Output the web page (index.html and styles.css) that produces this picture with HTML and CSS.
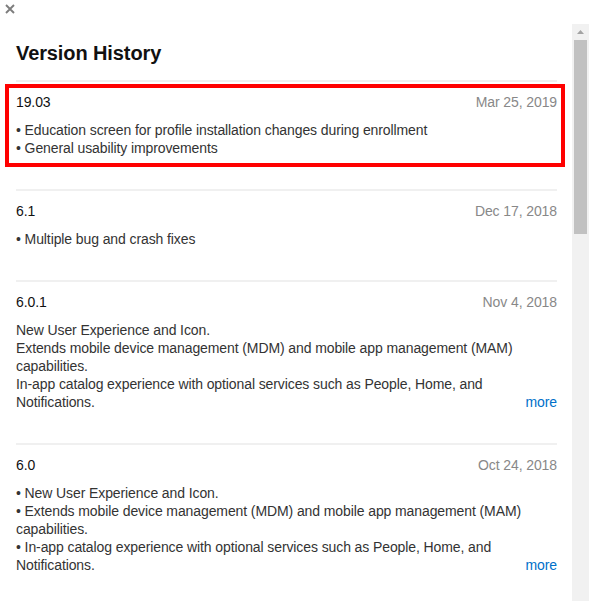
FILE: index.html
```html
<!DOCTYPE html>
<html lang="en">
<head>
<meta charset="utf-8">
<title>Version History</title>
<link rel="stylesheet" href="styles.css">
</head>
<body>
<div class="modal">
  <div class="modal-top">
    <button class="close" aria-label="Close">
      <svg width="10" height="10" viewBox="0 0 10 10"><path d="M1 1L9 9M9 1L1 9" stroke="#7d7d7d" stroke-width="1.9" stroke-linecap="butt"/></svg>
    </button>
  </div>
  <div class="scroll-area">
    <div class="viewport">
      <div class="content">
        <h2 class="heading">Version History</h2>
        <ul class="versions">
          <li class="version">
            <div class="version-head">
              <h3 class="version-number">19.03</h3>
              <time class="version-date">Mar 25, 2019</time>
            </div>
            <div class="version-notes">
              <p>• Education screen for profile installation changes during enrollment</p>
              <p>• General usability improvements</p>
            </div>
            <span class="annotation"></span>
          </li>
          <li class="version">
            <div class="version-head">
              <h3 class="version-number">6.1</h3>
              <time class="version-date">Dec 17, 2018</time>
            </div>
            <div class="version-notes">
              <p>• Multiple bug and crash fixes</p>
            </div>
          </li>
          <li class="version">
            <div class="version-head">
              <h3 class="version-number">6.0.1</h3>
              <time class="version-date">Nov 4, 2018</time>
            </div>
            <div class="version-notes">
              <p>New User Experience and Icon.</p>
              <p>Extends mobile device management (MDM) and mobile app management (MAM) capabilities.</p>
              <p>In-app catalog experience with optional services such as People, Home, and Notifications.<a class="more" href="#">more</a></p>
            </div>
          </li>
          <li class="version">
            <div class="version-head">
              <h3 class="version-number">6.0</h3>
              <time class="version-date">Oct 24, 2018</time>
            </div>
            <div class="version-notes">
              <p>• New User Experience and Icon.</p>
              <p>• Extends mobile device management (MDM) and mobile app management (MAM) capabilities.</p>
              <p>• In-app catalog experience with optional services such as People, Home, and Notifications.<a class="more" href="#">more</a></p>
            </div>
          </li>
        </ul>
      </div>
    </div>
    <div class="scrollbar" aria-hidden="true">
      <div class="scrollbar-up">
        <svg width="7" height="4" viewBox="0 0 7 4"><path d="M3.5 0L7 4H0z" fill="#a3a3a3"/></svg>
      </div>
      <div class="scrollbar-thumb"></div>
    </div>
  </div>
</div>
</body>
</html>
```
FILE: styles.css
```css
html, body {
  margin: 0;
  padding: 0;
  height: 100%;
  overflow: hidden;
  background: #fff;
}

body {
  font-family: "Liberation Sans", Arial, sans-serif;
  font-size: 14px;
  letter-spacing: -0.1px;
  color: #333;
}

.modal {
  display: flex;
  flex-direction: column;
  height: 601px;
}

.modal-top {
  flex: none;
  height: 24px;
}

.close {
  display: block;
  width: 10px;
  height: 10px;
  margin: 4px 0 0 5px;
  padding: 0;
  border: 0;
  background: none;
  cursor: pointer;
}

.close svg {
  display: block;
}

.scroll-area {
  flex: 1;
  min-height: 0;
  display: flex;
}

.viewport {
  flex: 1;
  min-width: 0;
  overflow: hidden;
}

.scrollbar {
  flex: none;
  width: 17px;
  background: #f1f1f1;
  display: flex;
  flex-direction: column;
  align-items: center;
}

.scrollbar-up {
  height: 16px;
  width: 17px;
  display: flex;
  align-items: center;
  justify-content: center;
}

.scrollbar-up svg {
  display: block;
}

.scrollbar-thumb {
  width: 13px;
  height: 194px;
  background: #c1c1c1;
}

.content {
  padding: 17px 15px 0 16px;
}

.heading {
  margin: 0 0 15px;
  font-size: 20px;
  line-height: 24px;
  font-weight: bold;
  color: #111;
  letter-spacing: -0.1px;
}

.versions {
  list-style: none;
  margin: 0;
  padding: 0;
}

.version {
  position: relative;
  border-top: 2px solid #f0f0f0;
  padding: 11px 0 32px;
}

.version-head {
  display: flex;
  justify-content: space-between;
  align-items: baseline;
  line-height: 18px;
}

.version-number {
  margin: 0;
  font-size: 14px;
  font-weight: normal;
  color: #111;
}

.version-date {
  color: #888;
}

.version-notes {
  margin-top: 10px;
  line-height: 18px;
}

.version-notes p {
  margin: 0;
}

.more {
  float: right;
  color: #0070c9;
  text-decoration: none;
}

.annotation {
  position: absolute;
  top: 2px;
  left: -11px;
  width: 560px;
  height: 83px;
  box-sizing: border-box;
  border: 4px solid #f00;
  pointer-events: none;
}
```
